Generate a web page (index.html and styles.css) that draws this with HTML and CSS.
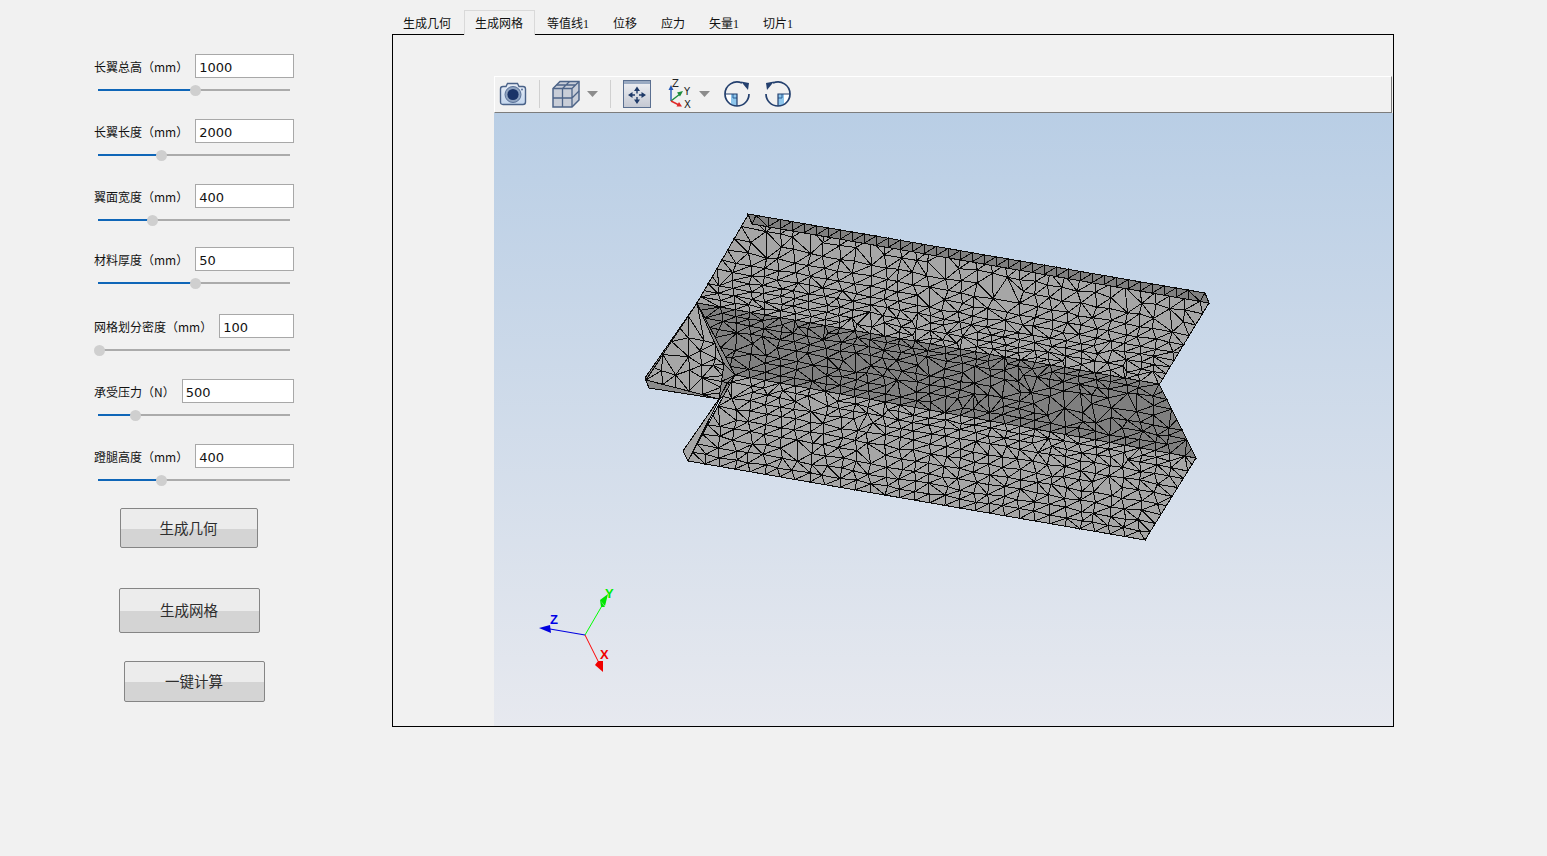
FILE: index.html
```html
<!DOCTYPE html>
<html lang="zh">
<head>
<meta charset="utf-8">
<title>长翼网格</title>
<link rel="stylesheet" href="styles.css">
</head>
<body>
<div class="app">
  <aside class="sidebar">
    <div class="field">
      <div class="field-head"><label class="field-label">长翼总高（mm）</label><input class="num" value="1000"></div>
      <div class="slider"><div class="fill" style="width:97px"></div><div class="thumb"></div></div>
    </div>
    <div class="field">
      <div class="field-head"><label class="field-label">长翼长度（mm）</label><input class="num" value="2000"></div>
      <div class="slider"><div class="fill" style="width:63px"></div><div class="thumb"></div></div>
    </div>
    <div class="field field-short">
      <div class="field-head"><label class="field-label">翼面宽度（mm）</label><input class="num" value="400"></div>
      <div class="slider"><div class="fill" style="width:54px"></div><div class="thumb"></div></div>
    </div>
    <div class="field field-tall">
      <div class="field-head"><label class="field-label">材料厚度（mm）</label><input class="num" value="50"></div>
      <div class="slider"><div class="fill" style="width:97px"></div><div class="thumb"></div></div>
    </div>
    <div class="field">
      <div class="field-head"><label class="field-label">网格划分密度（mm）</label><input class="num" value="100"></div>
      <div class="slider"><div class="fill" style="width:1px"></div><div class="thumb"></div></div>
    </div>
    <div class="field">
      <div class="field-head"><label class="field-label">承受压力（N）</label><input class="num" value="500"></div>
      <div class="slider"><div class="fill" style="width:37px"></div><div class="thumb"></div></div>
    </div>
    <div class="field field-last">
      <div class="field-head"><label class="field-label">蹬腿高度（mm）</label><input class="num" value="400"></div>
      <div class="slider"><div class="fill" style="width:63px"></div><div class="thumb"></div></div>
    </div>
    <button class="btn btn-geo">生成几何</button>
    <button class="btn btn-mesh">生成网格</button>
    <button class="btn btn-calc">一键计算</button>
  </aside>

  <main class="workspace">
    <nav class="tabs">
      <span class="tab tab-first">生成几何</span>
      <span class="tab tab-active">生成网格</span>
      <span class="tab">等值线1</span>
      <span class="tab">位移</span>
      <span class="tab">应力</span>
      <span class="tab">矢量1</span>
      <span class="tab">切片1</span>
    </nav>
    <section class="pane">
      <div class="viewer">
        <div class="toolbar">
          <svg class="icon icon-camera" width="28" height="24" viewBox="0 0 28 24">
            <defs><linearGradient id="camBody" x1="0" y1="0" x2="0" y2="1"><stop offset="0" stop-color="#e9eef6"/><stop offset="1" stop-color="#c3d6ee"/></linearGradient></defs>
            <path d="M1.500 7 Q1.500 4.500 4 4.500 H7 L8.500 1.500 H18.500 L20 4.500 H24 Q26.500 4.500 26.500 7 V20 Q26.500 22.500 24 22.500 H4 Q1.500 22.500 1.500 20 Z" fill="url(#camBody)" stroke="#4a6288" stroke-width="1.400"/>
            <circle cx="14" cy="12.500" r="8" fill="#8fa3c0" stroke="#5a7299" stroke-width="1"/>
            <circle cx="14" cy="12.500" r="5.600" fill="#1b3468"/>
            <circle cx="23" cy="7.500" r="1" fill="#5a7299"/>
          </svg>
          <span class="sep"></span>
          <svg class="icon icon-cube" width="28" height="28" viewBox="0 0 28 28">
            <path d="M1 8.500 L8 1.500 H27 V20 L20 27 H1 Z" fill="#c9ced8" stroke="#4d6488" stroke-width="1.500"/>
            <path d="M1 8.500 H20 V27 M20 8.500 L27 1.500 M10.500 8.500 V27 M1 18 H20 M10.500 8.500 L17.500 1.500 M20 18 L27 11 M4.500 5 H23.500" fill="none" stroke="#4d6488" stroke-width="1.300"/>
          </svg>
          <svg class="icon caret" width="11" height="6" viewBox="0 0 11 6"><path d="M0 0 H11 L5.500 6 Z" fill="#8c8c8c"/></svg>
          <span class="sep"></span>
          <svg class="icon icon-fit" width="28" height="28" viewBox="0 0 28 28">
            <defs><linearGradient id="fitBody" x1="0" y1="0" x2="0" y2="1"><stop offset="0" stop-color="#f1f2f5"/><stop offset="1" stop-color="#c4c8d2"/></linearGradient></defs>
            <rect x="0.500" y="0.500" width="27" height="27" fill="url(#fitBody)" stroke="#5a6f90"/>
            <rect x="1" y="1" width="26" height="3" fill="#9aaac2"/>
            <path d="M14 10 V13.500 M14 17 V20.500 M8 15 H12 M16 15 H20" stroke="#1f3a68" stroke-width="1.400"/>
            <path d="M14 6.500 L11 11 H17 Z M14 24 L11 19.500 H17 Z M5 15 L9.500 12 V18 Z M23 15 L18.500 12 V18 Z" fill="#1f3a68"/>
          </svg>
          <svg class="icon icon-axes" width="26" height="30" viewBox="0 0 26 30">
            <path d="M4 22 V9" stroke="#2257b5" stroke-width="1.400"/>
            <path d="M4 6 L1.500 11 H6.500 Z" fill="#2257b5"/>
            <path d="M4 22 L13 15" stroke="#1e8c3c" stroke-width="1.400"/>
            <path d="M16 12 L10 13.500 L13 17.500 Z" fill="#1e8c3c"/>
            <path d="M4 22 L12 26" stroke="#e02a2a" stroke-width="1.400"/>
            <path d="M15 27.500 L9.500 27.500 L12 23 Z" fill="#e02a2a"/>
            <text class="axis-letter" x="5" y="8">Z</text>
            <text class="axis-letter" x="17" y="16">Y</text>
            <text class="axis-letter" x="17" y="28.500">X</text>
          </svg>
          <svg class="icon caret caret-axes" width="11" height="6" viewBox="0 0 11 6"><path d="M0 0 H11 L5.500 6 Z" fill="#8c8c8c"/></svg>
          <svg class="icon icon-rot-cw" width="26" height="26" viewBox="0 0 26 26">
            <path d="M1 13 H13 V25 A12 12 0 0 1 1 13 Z" fill="#fff"/>
            <path d="M7 13 H13 V25 A12 12 0 0 1 7 23.400 Z" fill="#8ec6ec"/>
            <path d="M9 13 V17 H13" fill="none" stroke="#2a5f96" stroke-width="1"/>
            <path d="M1 13 A12 12 0 0 1 18 2.100 M25 13 A12 12 0 0 1 1 13" fill="none" stroke="#24406e" stroke-width="1.700"/>
            <path d="M1 13 H13 V25" fill="none" stroke="#24406e" stroke-width="1.200"/>
            <path d="M17 0.500 L25 2 L24 9 Z" fill="#24406e"/>
          </svg>
          <svg class="icon icon-rot-ccw" width="26" height="26" viewBox="0 0 26 26">
            <path d="M25 13 H13 V25 A12 12 0 0 0 25 13 Z" fill="#fff"/>
            <path d="M19 13 H13 V25 A12 12 0 0 0 19 23.400 Z" fill="#8ec6ec"/>
            <path d="M17 13 V17 H13" fill="none" stroke="#2a5f96" stroke-width="1"/>
            <path d="M25 13 A12 12 0 0 0 8 2.100 M1 13 A12 12 0 0 0 25 13" fill="none" stroke="#24406e" stroke-width="1.700"/>
            <path d="M25 13 H13 V25" fill="none" stroke="#24406e" stroke-width="1.200"/>
            <path d="M9 0.500 L1 2 L2 9 Z" fill="#24406e"/>
          </svg>
        </div>
        <svg class="scene" id="scene" viewBox="494 113 899 613" width="899" height="613">
          <g id="mesh"></g>
          <g class="triad">
            <path d="M585 635 L603 604" stroke="#00ff00" stroke-width="1"/>
            <path d="M608 594 L600 600 L605 606 Z M600 600 L605 607 L601 607 Z" fill="#00e600"/>
            <path d="M585 635 L550 629" stroke="#0000e0" stroke-width="1.200"/>
            <path d="M539 628 L550 625 L551 633 Z" fill="#0000e0"/>
            <path d="M585 635 L598 661" stroke="#ff0000" stroke-width="1"/>
            <path d="M603 672 L595 665 L598 661 L603 661 Z" fill="#f00000"/>
            <text class="triad-letter triad-y" x="605" y="598">Y</text>
            <text class="triad-letter triad-z" x="550" y="624">Z</text>
            <text class="triad-letter triad-x" x="600" y="659">X</text>
          </g>
        </svg>
      </div>
    </section>
  </main>
</div>
<script src="mesh.js"></script>
</body>
</html>
```

FILE: styles.css
```css
* { box-sizing: border-box; }
html, body { margin: 0; height: 100%; }
body {
  background: #f1f1f1;
  color: #111;
  font-family: "Noto Sans CJK SC", "Noto Sans", sans-serif;
  overflow: hidden;
}
.app { display: flex; height: 856px; }

/* sidebar */
.sidebar {
  width: 392px;
  flex: none;
  padding: 54px 0 0 94px;
}
.field { width: 200px; height: 42px; margin-bottom: 23px; }
.field-short { margin-bottom: 21px; }
.field-tall { margin-bottom: 25px; }
.field-last { margin-bottom: 22px; }
.field-head { display: flex; align-items: center; gap: 7px; height: 24px; }
.field-label { font-size: 12px; line-height: 24px; padding-top: 2px; white-space: nowrap; flex: none; }
.num {
  flex: 1;
  min-width: 0;
  height: 24px;
  padding: 2px 3px 0;
  border: 1px solid #a8a8a8;
  border-radius: 0;
  background: #fff;
  color: #111;
  font: 13px "DejaVu Sans", sans-serif;
  outline: none;
}
.slider {
  display: flex;
  width: 192px;
  height: 2px;
  margin: 11px 0 0 4px;
  background: #ababab;
}
.fill { height: 2px; background: #0f66b8; flex: none; }
.thumb {
  flex: none;
  width: 11px;
  height: 11px;
  margin: -4.5px 0 0 -5.5px;
  border-radius: 50%;
  background: #cfcfcf;
}

/* buttons */
.btn {
  display: block;
  padding: 0 1px 2px 0;
  border: 1px solid #858585;
  border-radius: 2px;
  color: #2e2e2e;
  font-family: "Noto Sans CJK SC", sans-serif;
  font-size: 14.5px;
  font-weight: 400;
  background: linear-gradient(#ececec 0, #ececec 52%, #d4d4d4 52%, #d4d4d4 100%);
}
.btn-geo { width: 138px; height: 40px; margin: 0 0 40px 26px; }
.btn-mesh { width: 141px; height: 45px; margin: 0 0 28px 25px; }
.btn-calc { width: 141px; height: 41px; margin: 0 0 0 30px; }

/* tabs */
.workspace { width: 1002px; flex: none; padding-top: 10px; }
.tabs {
  display: flex;
  height: 24px;
  font-family: "Liberation Serif", "Noto Sans CJK SC", serif;
  font-size: 12px;
  position: relative;
  z-index: 1;
}
.tab { padding: 0 12px 0 12px; line-height: 28px; height: 24px; white-space: nowrap; }
.tab-first { padding: 0 13px 0 11px; }
.tab-active {
  height: 25px;
  background: #f1f1f1;
  border: 1px solid #d9d9d9;
  border-bottom: 0;
  padding: 0 11px 0 10px;
  line-height: 26px;
}
.pane {
  width: 1002px;
  height: 693px;
  border: 1px solid #000;
  padding: 41px 0 0 101px;
}

/* viewer */
.viewer { width: 899px; height: 650px; }
.toolbar {
  display: flex;
  align-items: center;
  width: 898px;
  height: 37px;
  padding: 0 0 1px 4px;
  background: #f1f1f1;
  border-top: 1px solid #fff;
  border-left: 1px solid #fff;
  border-right: 1px solid #7c7c7c;
  border-bottom: 1px solid #7c7c7c;
}
.icon { display: block; flex: none; }
.sep { width: 1px; height: 28px; background: #d0d0d0; margin: 0 12px; flex: none; }
.caret { margin-left: 7px; }
.icon-axes { margin-left: 16px; }
.caret-axes { margin-left: 6px; }
.icon-rot-cw { margin-left: 14px; }
.icon-rot-ccw { margin-left: 15px; }
.axis-letter { font: 10px "DejaVu Sans", sans-serif; fill: #222; }
.scene {
  display: block;
  background: linear-gradient(#b9cee5 0, #e7e9ef 100%);
}
.triad-letter { font: bold 13px "Liberation Sans", sans-serif; }
.triad-y { fill: #00ee00; }
.triad-z { fill: #0000e6; }
.triad-x { fill: #f00000; }
```

FILE: mesh.js
```js
(function () {
  var seed = 20240611;
  function rnd() {
    seed = (seed * 1664525 + 1013904223) >>> 0;
    return seed / 4294967296;
  }
  function delaunay(pts) {
    var n = pts.length;
    var all = pts.concat([[-1e5, -1e5], [1e5, -1e5], [0, 1e5]]);
    function circ(a, b, c) {
      var A = all[a], B = all[b], C = all[c];
      var d = 2 * (A[0] * (B[1] - C[1]) + B[0] * (C[1] - A[1]) + C[0] * (A[1] - B[1]));
      var a2 = A[0] * A[0] + A[1] * A[1], b2 = B[0] * B[0] + B[1] * B[1], c2 = C[0] * C[0] + C[1] * C[1];
      var x = (a2 * (B[1] - C[1]) + b2 * (C[1] - A[1]) + c2 * (A[1] - B[1])) / d;
      var y = (a2 * (C[0] - B[0]) + b2 * (A[0] - C[0]) + c2 * (B[0] - A[0])) / d;
      return { a: a, b: b, c: c, x: x, y: y, r: (A[0] - x) * (A[0] - x) + (A[1] - y) * (A[1] - y) };
    }
    var tris = [circ(n, n + 1, n + 2)];
    for (var i = 0; i < n; i++) {
      var p = all[i], edges = {}, keep = [];
      tris.forEach(function (t) {
        var dx = p[0] - t.x, dy = p[1] - t.y;
        if (dx * dx + dy * dy < t.r) {
          [[t.a, t.b], [t.b, t.c], [t.c, t.a]].forEach(function (e) {
            var k = Math.min(e[0], e[1]) + "_" + Math.max(e[0], e[1]);
            edges[k] = edges[k] ? null : e;
          });
        } else keep.push(t);
      });
      Object.keys(edges).forEach(function (k) {
        if (edges[k]) keep.push(circ(edges[k][0], edges[k][1], i));
      });
      tris = keep;
    }
    return tris.filter(function (t) { return t.a < n && t.b < n && t.c < n; });
  }
  function lerp(P, Q, t) {
    return [P[0] + (Q[0] - P[0]) * t, P[1] + (Q[1] - P[1]) * t];
  }
  // Rows follow the long edges; columns stay on a shared vertical lattice so the
  // triangles read as a near-regular mesh loosened by dropped and jittered nodes.
  function face(q, rows, step, fill, jit) {
    var A = q[0], B = q[1], C = q[2], D = q[3];
    var pts = [];
    rows.forEach(function (v, r) {
      var edge = r === 0 || r === rows.length - 1;
      var gap = edge ? 0 : Math.min(rows[r] - rows[r - 1], rows[r + 1] - rows[r]);
      var coarse = gap > 0.125;
      var L = lerp(A, D, v), R = lerp(B, C, v);
      pts.push(L, R);
      var span = R[0] - L[0];
      var start = Math.ceil((L[0] + step * 0.55) / step) * step;
      for (var x = start; x < R[0] - step * 0.55; x += step) {
        var u = (x - L[0]) / span, vv = v;
        if (!edge) {
          if (rnd() < (coarse ? 0.16 : 0.03)) continue;
          u += (rnd() - 0.5) * jit * step / span;
          vv += (rnd() - 0.5) * jit * gap * 0.6;
        }
        pts.push(lerp(lerp(A, D, vv), lerp(B, C, vv), u));
      }
    });
    var tr = pts.map(function (p) { return [p[0] + rnd() * 1e-3, p[1] + rnd() * 1e-3]; });
    var d = "";
    delaunay(tr).forEach(function (t) {
      var a = pts[t.a], b = pts[t.b], c = pts[t.c];
      var area = Math.abs((b[0] - a[0]) * (c[1] - a[1]) - (c[0] - a[0]) * (b[1] - a[1]));
      if (area < 4) return;
      d += "M" + a[0].toFixed(1) + " " + a[1].toFixed(1) + "L" + b[0].toFixed(1) + " " + b[1].toFixed(1) + "L" + c[0].toFixed(1) + " " + c[1].toFixed(1) + "Z";
    });
    poly([A, B, C, D], fill, "#0a0a0a");
    var el = document.createElementNS("http://www.w3.org/2000/svg", "path");
    el.setAttribute("d", d);
    el.setAttribute("fill", "none");
    el.setAttribute("stroke", "#0a0a0a");
    el.setAttribute("stroke-width", "1");
    el.setAttribute("shape-rendering", "crispEdges");
    root.appendChild(el);
  }
  function poly(pts, fill, stroke) {
    var el = document.createElementNS("http://www.w3.org/2000/svg", "polygon");
    el.setAttribute("points", pts.map(function (p) { return p.join(","); }).join(" "));
    el.setAttribute("fill", fill);
    if (stroke) {
      el.setAttribute("stroke", stroke);
      el.setAttribute("shape-rendering", "crispEdges");
    }
    root.appendChild(el);
  }
  var root = document.getElementById("mesh");
  var LIGHT = "#a6a6a6", DARK = "#7f7f7f", MID = "#8b8b8b";
  var rowsA = [0, 0.13, 0.27, 0.4, 0.51, 0.61, 0.7, 0.78, 0.86, 0.93, 1];
  var rowsB = [0, 0.08, 0.16, 0.25, 0.36, 0.47, 0.58, 0.69, 0.8, 0.9, 1];
  var rowsW = [0, 0.1, 0.21, 0.34, 0.48, 0.62, 0.75, 0.88, 1];

  // lower-left lobe
  poly([[645, 378], [649, 388], [719, 399], [735, 375], [697, 303]], MID, "#0a0a0a");
  face([[697, 303], [724, 364], [719, 399], [646, 380]], [0, 0.17, 0.33, 0.5, 0.67, 0.84, 1], 13, LIGHT, 0.4);
  face([[724, 364], [735, 375], [732, 390], [719, 399]], [0, 0.5, 1], 8, MID, 0.2);
  // upper flange
  face([[748, 215], [1209, 303], [1159, 385], [697, 303]], rowsA, 15, LIGHT, 0.4);
  // top edge strip
  face([[748, 214], [1205, 293], [1209, 303], [752, 224]], [0, 1], 12, DARK, 0);
  // web
  face([[697, 303], [1159, 384], [1196, 458], [735, 375]], rowsW, 15, DARK, 0.4);
  // lower flange tip and face
  poly([[721, 396], [683, 451], [688, 461]], LIGHT, "#0a0a0a");
  face([[735, 375], [1196, 458], [1145, 540], [688, 461]], rowsB, 15, LIGHT, 0.4);
})();
```
